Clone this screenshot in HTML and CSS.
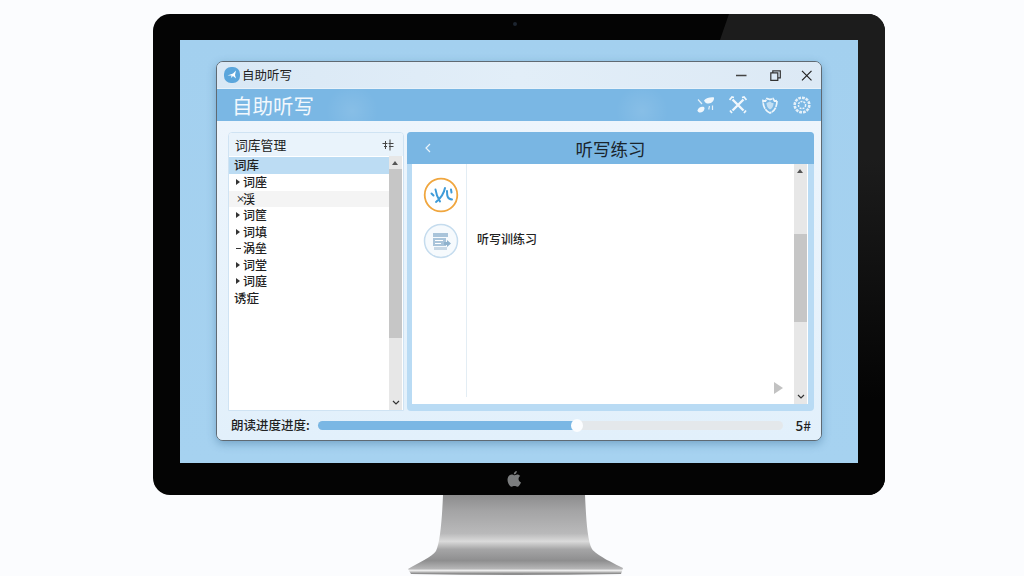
FILE: index.html
```html
<!DOCTYPE html>
<html lang="zh">
<head>
<meta charset="utf-8">
<title>自助听写</title>
<link rel="stylesheet" href="styles.css">
</head>
<body>
<div class="imac">
  <div class="bezel">
    <span class="camera"></span>
    <div class="screen">
      <div class="window">
        <div class="titlebar">
          <svg class="app-icon" viewBox="0 0 16 16"><rect width="16" height="16" rx="7" fill="#5ba6dc"/><path d="M3.500 8.500L9 6.500l3-3-1 4.500 1 3.500-3-2.500-2 2 .5-2.500z" fill="#fff"/></svg>
          <span class="app-name">自助听写</span>
          <span class="controls">
            <svg class="ctl-min" viewBox="0 0 11 11"><path d="M0 5.500h10.500" stroke="#444" stroke-width="1.500"/></svg>
            <svg class="ctl-max" viewBox="0 0 11 11"><path d="M.8 2.800h7v7.500h-7zM2.800 2.500V.8h7.500v7H8" fill="none" stroke="#333" stroke-width="1.200"/></svg>
            <svg viewBox="0 0 11 11"><path d="M1 .8l9.500 9.500M10.500 .8L1 10.300" stroke="#222" stroke-width="1.200"/></svg>
          </span>
        </div>
        <div class="header">
          <span class="header-title">自助听写</span>
          <span class="tools">
            <svg viewBox="0 0 18 18"><path d="M.5 14.500C1 11.500 4.500 10 7 11c1 1 .5 3-1 4.500-2 1.500-5 1.500-5.500-1z" fill="#f0f7fc"/><path d="M7 4.500C9 2 14 .8 17 1.500 17.500 4 15 7.500 11.500 7.500 9.500 7.500 8 7 7 4.500z" fill="#f0f7fc"/><path d="M1 3.500L5 8M12.500 10l-.8 3.500M15.500 9.500v4.500" stroke="#e4f0f9" stroke-width="1.200" fill="none"/></svg>
            <svg viewBox="0 0 18 18"><path d="M3.500 3.500l11 11M14.500 3.500l-11 11" stroke="#f0f7fc" stroke-width="2.400"/><path d="M.5 4L3 1l2 .5M17.500 4L15 1l-2 .5M1 14.500L3 17M17 14.500L15 17" fill="none" stroke="#f0f7fc" stroke-width="1.800"/></svg>
            <svg viewBox="0 0 18 18"><path d="M9 17C4.500 15 2 11 2 4.500l2.500.5L6 2.500 9 3.500l3-1L13.500 5l2.500-.5C16 11 13.500 15 9 17z" fill="none" stroke="#eef6fb" stroke-width="1.700" stroke-dasharray="6 .6"/><path d="M9 13.500C6.500 12 5.500 9.500 5.500 7L9 5.500l2 1.500 1.500 0C12.500 10 11.500 12.500 9 13.500z" fill="#c3dff3"/></svg>
            <svg viewBox="0 0 18 18"><circle cx="9" cy="9" r="7.300" fill="none" stroke="#e4f0f9" stroke-width="2.600" stroke-dasharray="2.800 1"/><circle cx="9" cy="9" r="3.600" fill="none" stroke="#eaf4fb" stroke-width="1.500" stroke-dasharray="2 1"/></svg>
          </span>
        </div>
        <div class="body">
          <div class="columns">
            <section class="library">
              <div class="library-head">
                <span>词库管理</span>
                <svg viewBox="0 0 12 12"><path d="M.5 4.500h5M6.500 4.500h5M2 7.500h3M7 7.500h4.500M3.500 2v8M8 .5v11" fill="none" stroke="#444" stroke-width="1"/></svg>
              </div>
              <div class="library-main">
                <ul class="tree">
                  <li class="row selected"><span class="row-root">词库</span></li>
                  <li class="row"><i class="tri"></i>词座</li>
                  <li class="row hover"><i class="mark">×</i>渓</li>
                  <li class="row"><i class="tri"></i>词筐</li>
                  <li class="row"><i class="tri"></i>词填</li>
                  <li class="row"><i class="dash"></i>涡垒</li>
                  <li class="row"><i class="tri"></i>词堂</li>
                  <li class="row"><i class="tri"></i>词庭</li>
                  <li class="row"><span class="row-root">诱症</span></li>
                </ul>
                <div class="scroll scroll-left">
                  <i class="arrow-up"></i>
                  <span class="thumb"></span>
                  <svg class="chev" viewBox="0 0 8 5"><path d="M1 1l3 3 3-3" fill="none" stroke="#333" stroke-width="1.200"/></svg>
                </div>
              </div>
            </section>
            <section class="practice">
              <div class="practice-head">
                <svg class="back" viewBox="0 0 6 10"><path d="M5 1L1 5l4 4" fill="none" stroke="#eaf4fb" stroke-width="1.200"/></svg>
                <span>听写练习</span>
              </div>
              <div class="practice-main">
                <div class="rail">
                  <svg class="badge" viewBox="0 0 36 36"><circle cx="18" cy="18" r="16.300" fill="#fff" stroke="#f0a63e" stroke-width="1.800"/><path d="M8.500 16.500l2 2M12.500 12.500c.5 4 2 8 4.500 12M22 11c-1 5-4 10-9 14M24 14c0 4 0 8 5 8.500M28 12.500l.5 3" fill="none" stroke="#3f9bd8" stroke-width="2" stroke-linecap="round"/></svg>
                  <svg class="badge" viewBox="0 0 36 36"><circle cx="18" cy="18" r="16.500" fill="#f6fafd" stroke="#c5dcee" stroke-width="1.500"/><path d="M10 10h15v4H10zM10 15h13v8H10z" fill="#a9c4da"/><path d="M12 17.500h8M12 20.500h6" stroke="#fff"/><path d="M11 24h13v3H11z" fill="#c6d7e5"/><path d="M21 19h3v-2l4 3.500-4 3.500v-2h-3z" fill="#8fb2cd"/></svg>
                </div>
                <div class="lesson"><span class="lesson-label">听写训练习</span><i class="play"></i></div>
                <div class="scroll scroll-right">
                  <i class="arrow-up"></i>
                  <span class="thumb"></span>
                  <svg class="chev" viewBox="0 0 8 5"><path d="M1 1l3 3 3-3" fill="none" stroke="#333" stroke-width="1.200"/></svg>
                </div>
              </div>
            </section>
          </div>
          <div class="progress">
            <span class="progress-label">朗读进度进度:</span>
            <div class="track"><div class="fill" style="width:55.7%"><span class="knob"></span></div></div>
            <span class="progress-value">5#</span>
          </div>
        </div>
      </div>
    </div>
  </div>
  <svg class="apple" viewBox="0 0 14 16"><path d="M9.800 0c.1 1.800-1.400 3.400-3 3.300C6.600 1.600 8.200.1 9.800 0zM7 4.200c.8 0 1.800-.8 3.200-.8 1.200 0 2.400.6 3.100 1.700-2.700 1.600-2.200 5.300.7 6.400-.8 1.900-2.200 4.300-3.700 4.300-1.100 0-1.500-.7-2.800-.7s-1.800.7-2.900.7C2.900 15.800.5 12 .5 8.800c0-3.200 2-5.300 4.200-5.300 1 0 1.800.7 2.300.7z" fill="#7b7d7e"/></svg>
  <svg class="stand" viewBox="0 0 216 81">
    <defs>
      <linearGradient id="metal" x1="0" y1="0" x2="0" y2="1">
        <stop offset="0" stop-color="#8d8d8e"/>
        <stop offset="0.2" stop-color="#a4a4a5"/>
        <stop offset="0.48" stop-color="#b9b9ba"/>
        <stop offset="0.58" stop-color="#dadada"/>
        <stop offset="0.68" stop-color="#a5a5a6"/>
        <stop offset="0.82" stop-color="#8e8e8f"/>
        <stop offset="0.92" stop-color="#b5b5b6"/>
        <stop offset="0.945" stop-color="#efefef"/>
        <stop offset="0.98" stop-color="#8f8f8f"/>
      </linearGradient>
    </defs>
    <path d="M35 0H177C178 20 179 45 184 54C188 60 205 68 215 73L213 79Q108 81 3 79L0 74C10 68 24 62 28 56C32 48 34 25 35 0Z" fill="url(#metal)"/>
  </svg>
</div>
</body>
</html>
```

FILE: styles.css
```css
* { box-sizing: border-box; }
html, body { margin: 0; height: 576px; overflow: hidden; }
body {
  background: #fbfcfe;
  font-family: "Noto Sans CJK SC", "Noto Sans", sans-serif;
  color: #222;
}
ul { list-style: none; margin: 0; padding: 0; }
i { font-style: normal; }

.imac {
  position: relative;
  width: 732px;
  margin: 14px 0 0 153px;
  display: flex;
  flex-direction: column;
  align-items: center;
}
.bezel {
  position: relative;
  width: 732px;
  height: 481px;
  padding: 26px 27px 32px;
  border-radius: 17px;
  background: #040404;
}
.bezel::before {
  content: "";
  position: absolute;
  inset: 0;
  border-radius: inherit;
  background: linear-gradient(180deg, #1c1c1c 0 30%, #040404 80%);
  clip-path: polygon(576px 0, 732px 0, 732px 481px, 567px 481px, 567px 26px);
}
.camera {
  position: absolute;
  top: 8px;
  left: 360px;
  width: 4px;
  height: 4px;
  border-radius: 50%;
  background: #1d2530;
}
.screen {
  position: relative;
  height: 100%;
  padding: 21px 36px 22px;
  background: linear-gradient(180deg, #a3d0ef, #a6d2f0);
}
.window {
  height: 100%;
  display: flex;
  flex-direction: column;
  border: 1px solid #5f6a73;
  border-radius: 7px;
  overflow: hidden;
  background: #e5f1fb;
  box-shadow: 0 3px 8px rgba(60, 110, 150, .45);
}
.titlebar {
  height: 26px;
  flex: none;
  display: flex;
  align-items: center;
  padding-left: 7px;
  background: linear-gradient(90deg, #d9e8f5, #e2eef8 50%, #dce9f5);
}
.app-icon { width: 16px; height: 16px; margin-right: 2px; }
.app-name { font-size: 12.500px; line-height: 1; }
.controls { margin-left: auto; display: flex; padding-right: 9px; }
.controls svg { width: 11px; height: 11px; }
.controls .ctl-min { margin-right: 23px; }
.controls .ctl-max { margin-right: 20px; }
.header {
  height: 33px;
  flex: none;
  display: flex;
  align-items: center;
  padding: 0 10px 0 15px;
  background:
    radial-gradient(circle 26px at 135px 22px, rgba(255, 255, 255, .1), transparent),
    radial-gradient(circle 26px at 425px 22px, rgba(255, 255, 255, .1), transparent),
    #7ab7e4;
  border-top: 1px solid #e8f2fa;
}
.header-title {
  font-size: 20.500px;
  line-height: 1;
  color: #f2f8fd;
}
.tools { margin-left: auto; display: flex; gap: 14px; }
.tools svg { width: 18px; height: 18px; }

.body {
  flex: 1;
  min-height: 0;
  display: flex;
  flex-direction: column;
  padding: 11px 7px 0 11px;
  background: linear-gradient(180deg, #edf5fc, #e2f0fb);
}
.columns { flex: 1; min-height: 0; display: flex; gap: 3px; }

.library {
  width: 176px;
  display: flex;
  flex-direction: column;
  border: 1px solid #cfe3f3;
  border-radius: 4px 4px 0 0;
  background: #fff;
  overflow: hidden;
}
.library-head {
  height: 23px;
  flex: none;
  display: flex;
  align-items: center;
  justify-content: space-between;
  padding: 0 9px 0 6px;
  background: #e9f3fb;
  font-size: 12.800px;
}
.library-head svg { width: 12px; height: 12px; }
.library-main { flex: 1; min-height: 0; display: flex; }
.tree { flex: 1; font-size: 12px; font-weight: 500; padding-top: 1px; }
.row {
  height: 16.500px;
  display: flex;
  align-items: center;
  padding-left: 7px;
  line-height: 1;
}
.row-root { margin-left: -2px; font-size: 12.500px; }
.selected { background: #bcdcf3; height: 17px; }
.hover { background: #f4f4f4; }
.tri {
  width: 0;
  height: 0;
  margin-right: 3px;
  border-left: 4px solid #333;
  border-top: 3px solid transparent;
  border-bottom: 3px solid transparent;
}
.mark { width: 7px; font-size: 9px; line-height: 1; }
.dash { width: 5px; height: 1px; margin-right: 2px; background: #333; }

.scroll {
  flex: none;
  width: 13px;
  position: relative;
  background: #e7e7e7;
}
.scroll-left { margin-right: 1px; }
.thumb { position: absolute; left: 0; right: 0; background: #c6c6c6; }
.scroll-left .thumb { top: 13px; height: 169px; }
.scroll-right .thumb { top: 70px; height: 88px; }
.arrow-up {
  position: absolute;
  top: 5px;
  left: 3px;
  width: 0;
  height: 0;
  border-left: 3.500px solid transparent;
  border-right: 3.500px solid transparent;
  border-bottom: 4px solid #555;
}
.chev { position: absolute; bottom: 5px; left: 3px; width: 8px; height: 5px; }

.practice {
  flex: 1;
  min-width: 0;
  display: flex;
  flex-direction: column;
  border-radius: 4px;
  background: #b9dbf4;
  overflow: hidden;
  padding-bottom: 7px;
}
.practice-head {
  height: 32px;
  flex: none;
  position: relative;
  display: flex;
  align-items: center;
  justify-content: center;
  background: #79b6e3;
  font-size: 17.500px;
  color: #1a242c;
}
.back { position: absolute; left: 18px; top: 11px; width: 6px; height: 10px; }
.practice-main {
  flex: 1;
  min-height: 0;
  display: flex;
  margin: 0 6px 0 5px;
  background: #fff;
}
.rail {
  width: 55px;
  flex: none;
  display: flex;
  flex-direction: column;
  align-items: center;
  gap: 10px;
  padding: 13px 0 0 4px;
  margin-bottom: 7px;
  border-right: 1px solid #e3edf4;
}
.badge { width: 36px; height: 36px; }
.lesson { flex: 1; position: relative; padding: 66px 0 0 10px; font-size: 12px; font-weight: 500; }
.lesson-label { line-height: 17px; }
.play {
  position: absolute;
  right: 11px;
  bottom: 10px;
  width: 0;
  height: 0;
  border-left: 9px solid #c2c2c2;
  border-top: 6.500px solid transparent;
  border-bottom: 6.500px solid transparent;
}
.scroll-right { margin-right: 1px; }

.progress {
  height: 29px;
  flex: none;
  display: flex;
  align-items: center;
  padding: 0 3px 0 3px;
}
.progress-label { width: 87px; flex: none; font-size: 12.500px; font-weight: 500; line-height: 1; white-space: nowrap; }
.track {
  flex: 1;
  height: 9px;
  border-radius: 5px;
  background: #e4e8eb;
}
.fill {
  position: relative;
  height: 100%;
  border-radius: 5px;
  background: #7ab7e4;
}
.knob {
  position: absolute;
  right: -6px;
  top: -2px;
  width: 12px;
  height: 13px;
  border-radius: 50%;
  background: #fbfdff;
}
.progress-value { width: 28px; flex: none; text-align: right; font-size: 13.500px; font-weight: 500; line-height: 1; }

.apple { position: absolute; top: 457px; left: 354px; width: 14px; height: 16px; }
.stand { display: block; width: 216px; height: 81px; flex: none; margin-right: 7px; }
```
